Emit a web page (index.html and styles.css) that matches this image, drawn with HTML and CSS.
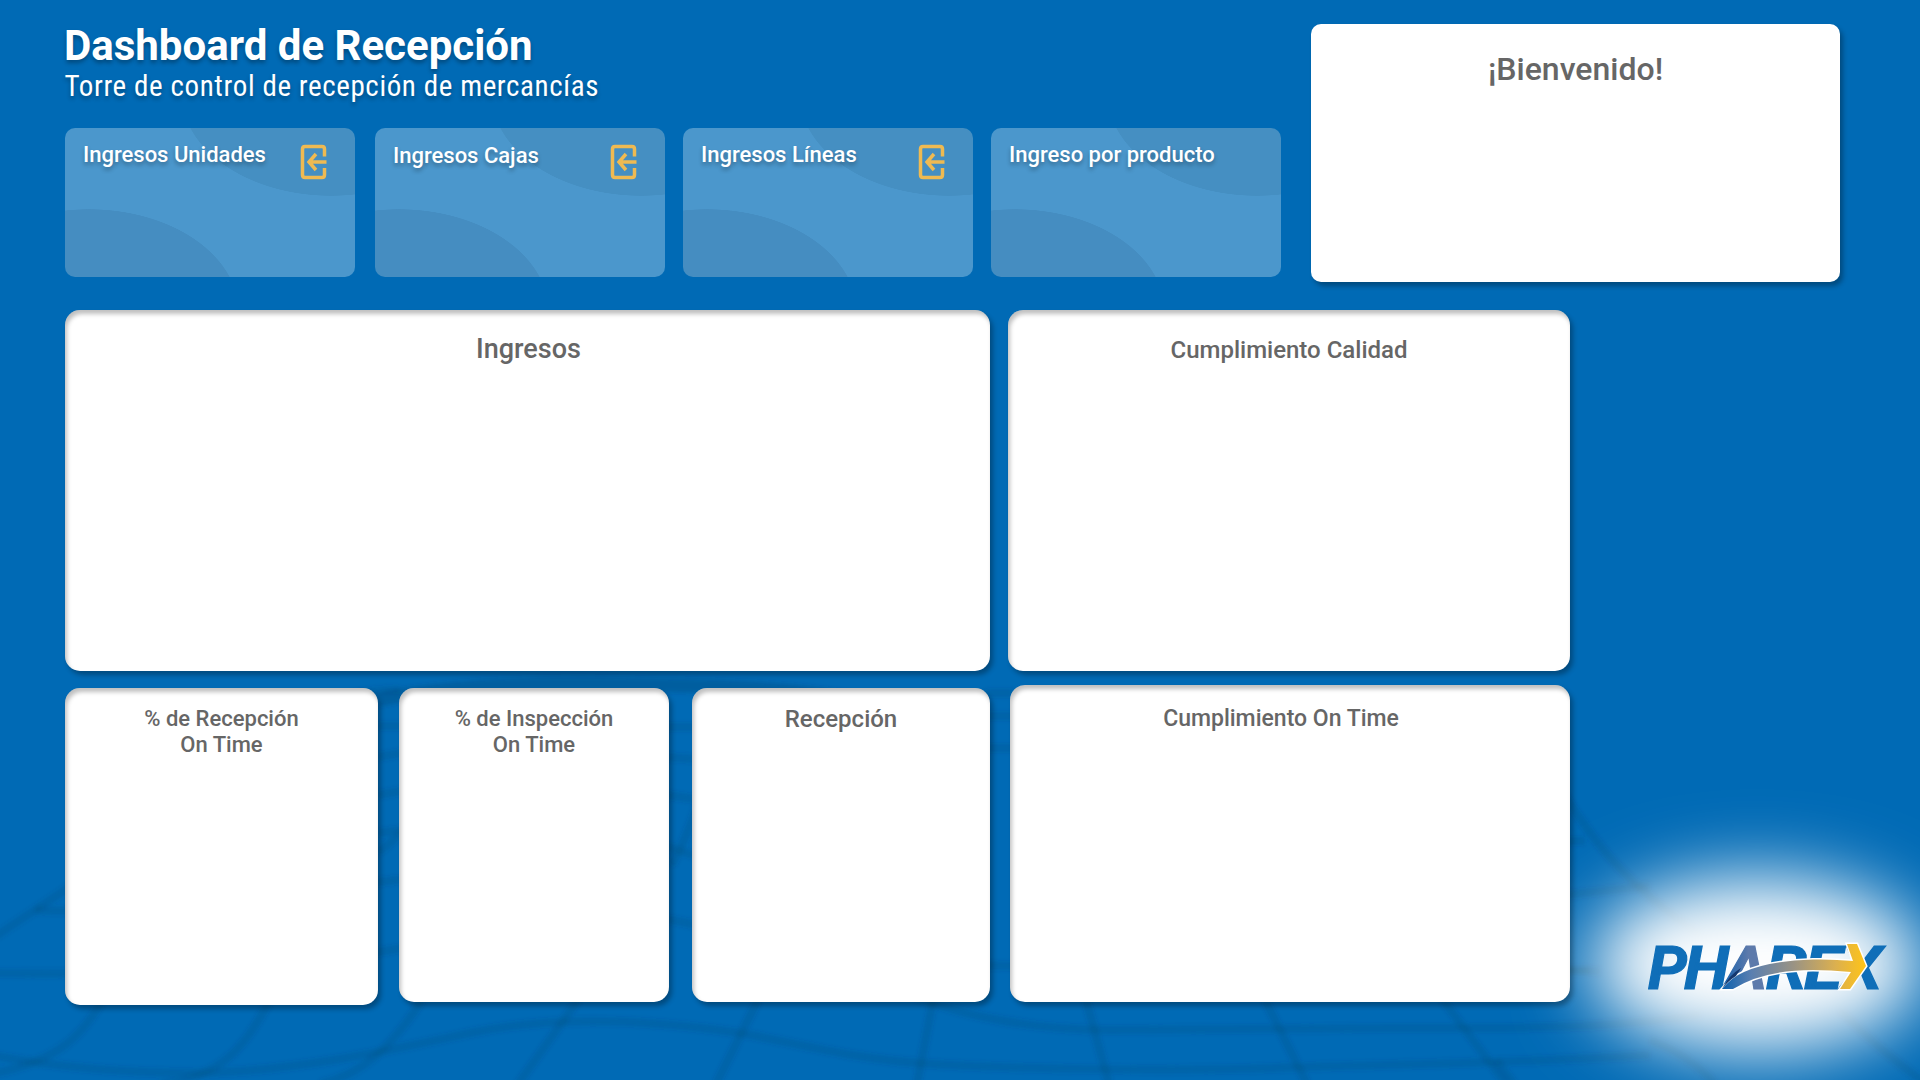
FILE: index.html
```html
<!DOCTYPE html>
<html lang="es">
<head>
<meta charset="utf-8">
<title>Dashboard de Recepción</title>
<link rel="stylesheet" href="styles.css">
</head>
<body>
<svg class="backdrop" viewBox="0 0 1920 1080" aria-hidden="true">
  <defs>
    <filter id="soft" x="-5%" y="-5%" width="110%" height="110%"><feGaussianBlur stdDeviation="2"/></filter>
    <filter id="glow" x="-80%" y="-120%" width="260%" height="340%"><feGaussianBlur stdDeviation="37"/></filter>
  </defs>
  <g class="mesh" filter="url(#soft)">
    <path d="M-10 940 L35 910 C90 874 140 840 200 780 S330 690 400 690"/>
    <path d="M35 910 C150 915 300 890 378 882 S480 865 560 845 S680 855 700 856"/>
    <path d="M-10 973 C120 975 260 970 378 952 S590 900 692 924 S900 965 1012 966 S1400 968 1600 971"/>
    <path d="M-10 1055 C60 1068 130 1073 200 1073 C300 1071 400 1048 470 1033 C550 1016 640 1018 740 1033 C800 1044 850 1058 918 1063 S1150 1072 1274 1068 S1500 1064 1650 1055"/>
    <path d="M900 990 C960 1018 1040 1030 1110 1030 S1280 1028 1389 1028 S1600 1030 1700 1015"/>
    <path d="M-10 1074 C60 1062 85 1032 102 1000"/>
    <path d="M270 1000 C245 1046 222 1078 160 1084"/>
    <path d="M422 1000 C390 1050 360 1075 320 1084"/>
    <path d="M578 1000 L518 1084"/>
    <path d="M758 1000 L716 1084"/>
    <path d="M672 865 C690 830 696 810 706 780"/>
    <path d="M378 852 C388 846 396 838 404 830"/>
    <path d="M933 1000 L917 1084"/>
    <path d="M1086 1000 L1109 1084"/>
    <path d="M1265 1000 L1307 1084"/>
    <path d="M1443 1000 Q1468 1034 1506 1084"/>
    <path d="M378 726 H402 M378 757 L402 753 M378 795 L402 791 M378 833 L402 830"/>
    <path d="M666 727 H696 M666 757 L696 759 M666 795 L696 799"/>
    <path d="M986 693 H1014 M986 716 H1014 M986 748 H1014"/>
    <path class="mesh-wide" d="M378 700 C450 684 560 682 620 684 S760 684 860 700"/>
    <path d="M1565 796 C1592 838 1620 880 1700 935"/>
    <path d="M1565 895 L1650 886 M1565 841 H1585 M1560 970 H1590"/>
    <path d="M1840 1010 Q1880 1052 1930 1086"/>
    <path d="M1496 1060 L1514 1084 M1650 1040 Q1690 1055 1715 1084"/>
  </g>
  <ellipse class="halo" cx="1757" cy="964" rx="168" ry="87" filter="url(#glow)"/>
</svg>

<main class="board">
  <section class="top">
    <div class="intro">
      <h1 class="title">Dashboard de Recepción</h1>
      <p class="subtitle">Torre de control de recepción de mercancías</p>
      <div class="metrics">
        <article class="metric">
          <h2 class="metric-label">Ingresos Unidades</h2>
          <svg class="metric-icon" viewBox="0 0 27 36"><path d="M24.500 12.500V5Q24.500 2.500 22 2.500H5Q2.500 2.500 2.500 5V31Q2.500 33.500 5 33.500H22Q24.500 33.500 24.500 31V24M26.500 18H9M16 10L9 18L16 26"/></svg>
        </article>
        <article class="metric metric-low">
          <h2 class="metric-label">Ingresos Cajas</h2>
          <svg class="metric-icon" viewBox="0 0 27 36"><path d="M24.500 12.500V5Q24.500 2.500 22 2.500H5Q2.500 2.500 2.500 5V31Q2.500 33.500 5 33.500H22Q24.500 33.500 24.500 31V24M26.500 18H9M16 10L9 18L16 26"/></svg>
        </article>
        <article class="metric">
          <h2 class="metric-label">Ingresos Líneas</h2>
          <svg class="metric-icon" viewBox="0 0 27 36"><path d="M24.500 12.500V5Q24.500 2.500 22 2.500H5Q2.500 2.500 2.500 5V31Q2.500 33.500 5 33.500H22Q24.500 33.500 24.500 31V24M26.500 18H9M16 10L9 18L16 26"/></svg>
        </article>
        <article class="metric">
          <h2 class="metric-label">Ingreso por producto</h2>
        </article>
      </div>
    </div>
    <article class="welcome">¡Bienvenido!</article>
  </section>

  <section class="row row-main">
    <article class="panel panel-income">Ingresos</article>
    <article class="panel panel-quality">Cumplimiento Calidad</article>
  </section>

  <section class="row row-detail">
    <article class="panel panel-rate panel-tall">% de Recepción<br>On Time</article>
    <article class="panel panel-rate">% de Inspección<br>On Time</article>
    <article class="panel panel-reception">Recepción</article>
    <article class="panel panel-ontime">Cumplimiento On Time</article>
  </section>
</main>

<svg class="logo" viewBox="-10 -20 265 100" role="img" aria-label="PHAREX">
  <defs>
    <linearGradient id="swoosh" gradientUnits="userSpaceOnUse" x1="75" y1="0" x2="216" y2="0">
      <stop offset="0" stop-color="#0f62ae"/><stop offset=".2" stop-color="#5a7fb0"/><stop offset=".5" stop-color="#9a9384"/><stop offset=".8" stop-color="#dcb04f"/><stop offset="1" stop-color="#fdc31a"/>
    </linearGradient>
    <linearGradient id="letter-a" x1="0" y1="0" x2="1" y2="0">
      <stop offset="0" stop-color="#0f5fae"/><stop offset=".6" stop-color="#5d7aab"/>
    </linearGradient>
  </defs>
  <g class="logo-word">
    <text x="0" y="49.500" textLength="39" lengthAdjust="spacingAndGlyphs">P</text>
    <text x="36" y="49.500" textLength="45" lengthAdjust="spacingAndGlyphs">H</text>
    <text class="logo-a" x="77" y="49.500" textLength="42" lengthAdjust="spacingAndGlyphs">A</text>
    <text x="118" y="49.500" textLength="41" lengthAdjust="spacingAndGlyphs">R</text>
    <text x="156" y="49.500" textLength="38" lengthAdjust="spacingAndGlyphs">E</text>
    <text x="193" y="49.500" textLength="41" lengthAdjust="spacingAndGlyphs">X</text>
  </g>
  <path class="logo-arrow" d="M199 5H209L218 27L202 50H192L203 33Q182 31 165 31Q115 31 85 50H74Q84 38 96 33Q120 22 165 20.500Q185 20 205 22Z"/>
  <path class="logo-fold" d="M74 50Q81 36 93 29L88 37Q80 42 74 50Z"/>
</svg>
</body>
</html>
```

FILE: styles.css
```css
* { box-sizing: border-box; margin: 0; padding: 0; }

body {
  position: relative;
  width: 1920px;
  height: 1080px;
  overflow: hidden;
  background: #006ab5;
  font-family: Roboto, "Liberation Sans", sans-serif;
  color: #666;
}

.backdrop { position: absolute; inset: 0; width: 1920px; height: 1080px; }
.mesh { fill: none; stroke: #003c64; stroke-opacity: .16; stroke-width: 8; }
.mesh-wide { stroke-width: 14; stroke-opacity: .26; }
.halo { fill: #fff; }

.board { position: relative; padding: 23px 0 0 65px; }

.top { display: flex; gap: 30px; height: 259px; }
.intro { width: 1216px; }

.title {
  margin-left: -1px;
  font-size: 42px;
  font-weight: 700;
  line-height: 45px;
  color: #fff;
  text-shadow: 0 3px 4px rgba(0, 0, 0, .3);
}

.subtitle {
  margin-left: -.5px;
  font-family: "Roboto Condensed", Roboto, sans-serif;
  font-size: 29px;
  font-weight: 400;
  line-height: 36px;
  letter-spacing: .61px;
  color: #fff;
  text-shadow: 0 3px 4px rgba(0, 0, 0, .3);
}

.metrics {
  display: grid;
  grid-template-columns: 310px 308px 308px 290px;
  margin-top: 24px;
}

.metric {
  display: flex;
  justify-content: space-between;
  width: 290px;
  height: 149px;
  padding: 14px 28px 0 18px;
  border-radius: 10px;
  background:
    radial-gradient(150px 103px at 266px -35px, #458fc2 99.500%, transparent 100%),
    radial-gradient(150px 103px at 24px 184px, #458dc1 99.500%, transparent 100%),
    #4b97cc;
}

.metric-label {
  font-size: 22px;
  font-weight: 500;
  line-height: 26px;
  color: #fff;
  white-space: nowrap;
  text-shadow: 0 3px 4px rgba(0, 0, 0, .3);
}
.metric-low .metric-label { padding-top: 1px; }

.metric-icon {
  width: 27px;
  height: 36px;
  margin-top: 2px;
  fill: none;
  stroke: #efba52;
  stroke-width: 3.500px;
}

.welcome {
  width: 529px;
  height: 258px;
  margin-top: 1px;
  padding-top: 26px;
  border-radius: 10px;
  background: #fff;
  box-shadow: 3px 4px 5px rgba(0, 0, 0, .3);
  font-size: 32px;
  font-weight: 500;
  line-height: 38px;
  text-align: center;
}

.row { display: grid; align-items: end; }
.row-main { grid-template-columns: 925px 562px; column-gap: 18px; margin-top: 28px; }
.row-detail { grid-template-columns: 334px 293px 318px 560px; margin-top: 14px; align-items: start; }

.panel {
  border-radius: 15px;
  background: #fff;
  box-shadow: 3px 4px 5px rgba(0, 0, 0, .3), inset 2px 4px 4px rgba(0, 0, 0, .25);
  font-size: 24px;
  font-weight: 500;
  line-height: 28px;
  text-align: center;
}

.panel-income { height: 361px; padding: 23px 0 0 2px; font-size: 27px; line-height: 32px; }
.panel-quality { height: 361px; padding-top: 26px; }

.panel-rate {
  width: 270px;
  height: 314px;
  margin-top: 3px;
  padding-top: 18px;
  font-size: 22px;
  line-height: 26px;
}
.panel-tall { width: 313px; height: 317px; }
.panel-reception { width: 298px; height: 314px; margin-top: 3px; padding-top: 17px; }
.panel-ontime { height: 317px; padding: 20px 18px 0 0; font-size: 23px; }

.logo { position: absolute; left: 1638px; top: 919px; width: 265px; height: 100px; }
.logo-word { font: italic 700 61px Roboto, sans-serif; fill: #0f6eb8; stroke: #0f6eb8; stroke-width: 1.200px; }
.logo-a { fill: url(#letter-a); stroke: url(#letter-a); }
.logo-arrow { fill: url(#swoosh); stroke: #fff; stroke-width: 3px; paint-order: stroke; }
.logo-fold { fill: #14386e; }
```
